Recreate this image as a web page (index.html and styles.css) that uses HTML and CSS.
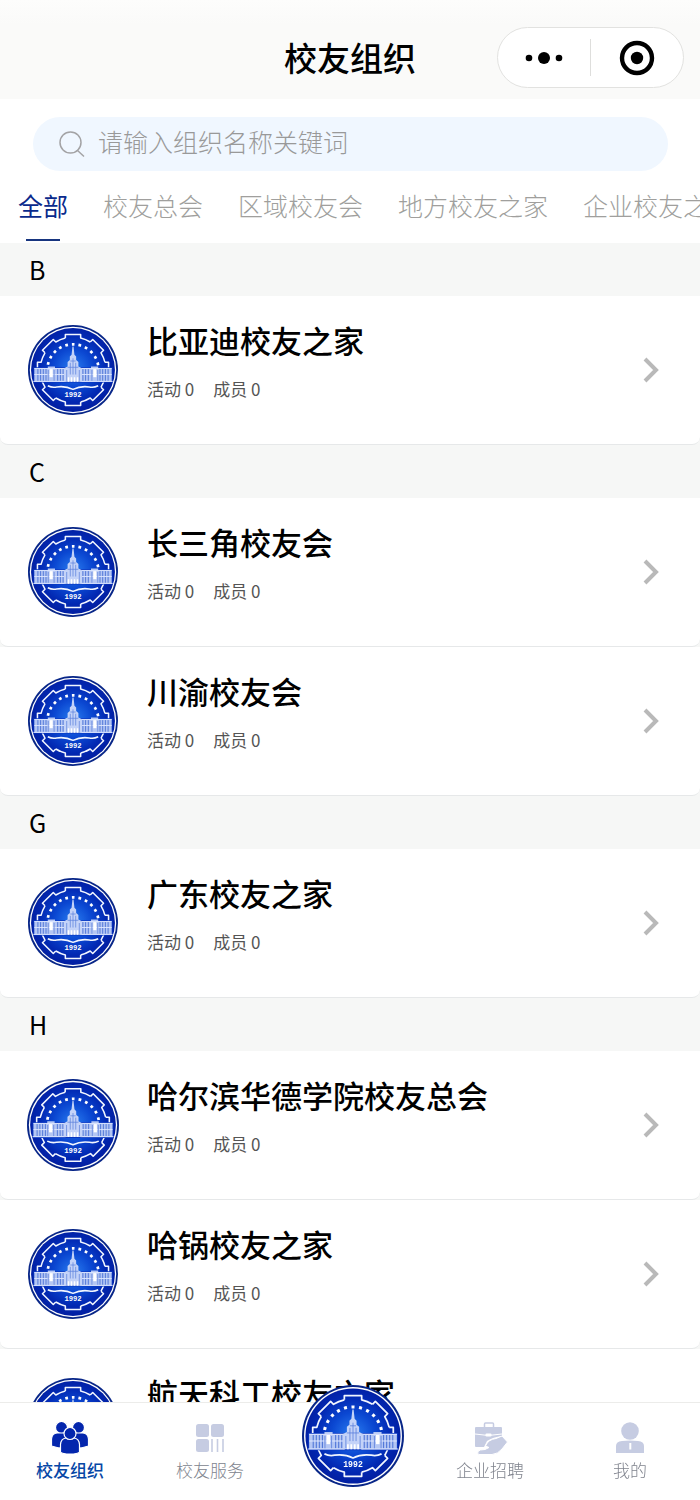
FILE: index.html
```html
<!DOCTYPE html>
<html lang="zh-CN">
<head>
<meta charset="utf-8">
<meta name="viewport" content="width=device-width, initial-scale=1">
<title>校友组织</title>
<link rel="stylesheet" href="styles.css">
</head>
<body>
<svg class="defs" aria-hidden="true">
  <defs>
    <radialGradient id="glow" cx="50%" cy="48%" r="50%">
      <stop offset="0" stop-color="#2a7df0"/>
      <stop offset="0.45" stop-color="#0b48d2"/>
      <stop offset="0.8" stop-color="#0228b2"/>
      <stop offset="1" stop-color="#0220a4"/>
    </radialGradient>
    <path id="tooth" d="M-8.5-35.5V-39.5H8.5V-35.5A36.5 36.5 0 0 1 19.1-31.1"/>
    <g id="wing">
      <path fill="#b4c6f3" d="M9-2H20V-4H28V-2H43V13H9z"/>
      <path stroke="#4a72d6" stroke-width="1" d="M11-1V12M14-1V12M17-1V12M30-1V12M33-1V12M36-1V12M39-1V12"/>
      <path stroke="#dfe8ff" stroke-width="1" d="M9-1.7H43M9 5H43M8 12.7H44"/>
      <path fill="#fff" d="M22.500-1H26V8H22.500z"/>
      <path stroke="#6d8de0" stroke-width="1" d="M21 0V12M27.500 0V12"/>
    </g>
    <symbol id="emblem" viewBox="-50 -50 100 100">
      <circle r="50" fill="#082688"/>
      <circle r="48" fill="#fff"/>
      <circle r="46.6" fill="url(#glow)"/>
      <g fill="none" stroke="#f2f6ff" stroke-width="1.7" stroke-linejoin="round">
        <use href="#tooth"/>
        <use href="#tooth" transform="rotate(45)"/>
        <use href="#tooth" transform="rotate(90)"/>
        <use href="#tooth" transform="rotate(135)"/>
        <use href="#tooth" transform="rotate(180)"/>
        <use href="#tooth" transform="rotate(225)"/>
        <use href="#tooth" transform="rotate(270)"/>
        <use href="#tooth" transform="rotate(315)"/>
      </g>
      <circle r="28.5" fill="none" stroke="#fff" stroke-width="3" stroke-dasharray="3 4.46" pathLength="179.04" stroke-dashoffset="1.5" transform="rotate(180)" clip-path="url(#upper)"/>
      <path fill="#0936c0" d="M-44-3H44V14H-44z"/>
      <use href="#wing"/>
      <use href="#wing" transform="scale(-1 1)"/>
      <path fill="#c4d3f8" d="M-.6-26H.6L1.6-17L3.500-15V-11L6-9V-4L10-2V13H-10V-2L-6-4V-9L-3.500-11V-15L-1.6-17z"/>
      <path stroke="#5b80dc" stroke-width=".8" d="M-3-8V5M0-13V5M3-8V5M-7 0V12M7 0V12M-6-3H6M-3-10H3"/>
      <path stroke="#fff" stroke-width="1.700" d="M-5 8V13M-1.700 8V13M1.700 8V13M5 8V13"/>
      <path fill="none" stroke="#f2f6ff" stroke-width="1.700" stroke-linejoin="round" d="M-28 17.500Q-23 20-18 18.800Q-8 17.500 0 21.500Q8 17.500 18 18.800Q23 20 28 17.500"/>
      <text class="emblem-year" x="0" y="30" text-anchor="middle">1992</text>
    </symbol>
    <clipPath id="upper"><path d="M-34-8H34V40H-34z"/></clipPath>
    <symbol id="arrow" viewBox="0 0 18 28">
      <path d="M3 3L14 14L3 25" fill="none" stroke="#b9b9b9" stroke-width="4"/>
    </symbol>
  </defs>
</svg>

<div class="app">
  <header class="titlebar">
    <h1 class="title">校友组织</h1>
    <div class="capsule">
      <button class="capsule-btn" type="button" aria-label="更多">
        <svg width="38" height="14" viewBox="0 0 38 14"><circle cx="4" cy="7" r="3.300"/><circle cx="19" cy="7" r="6"/><circle cx="34" cy="7" r="3.300"/></svg>
      </button>
      <button class="capsule-btn" type="button" aria-label="关闭">
        <svg width="36" height="36" viewBox="0 0 36 36"><circle cx="18" cy="18" r="15" fill="none" stroke="#000" stroke-width="4.400"/><circle cx="18" cy="18" r="6.200"/></svg>
      </button>
    </div>
  </header>

  <div class="filters">
    <label class="search">
      <svg class="search-icon" width="28" height="28" viewBox="0 0 28 28"><circle cx="12.500" cy="12.500" r="10.500"/><path d="M19 20L26 26.500"/></svg>
      <input class="search-input" type="search" aria-label="搜索组织" placeholder="请输入组织名称关键词">
    </label>
    <nav class="tabs" aria-label="组织类型">
      <button class="tab tab-active" type="button">全部</button>
      <button class="tab" type="button">校友总会</button>
      <button class="tab" type="button">区域校友会</button>
      <button class="tab" type="button">地方校友之家</button>
      <button class="tab" type="button">企业校友之家</button>
    </nav>
  </div>

  <main class="list">
    <h2 class="letter">B</h2>
    <a class="card" href="#byd"><span class="logo-slot"><svg class="logo"><use href="#emblem"/></svg></span><span class="info"><span class="name">比亚迪校友之家</span><span class="meta"><span>活动 0</span><span>成员 0</span></span></span><svg class="arrow"><use href="#arrow"/></svg></a>
    <h2 class="letter">C</h2>
    <a class="card" href="#csj"><span class="logo-slot"><svg class="logo"><use href="#emblem"/></svg></span><span class="info"><span class="name">长三角校友会</span><span class="meta"><span>活动 0</span><span>成员 0</span></span></span><svg class="arrow"><use href="#arrow"/></svg></a>
    <a class="card" href="#cy"><span class="logo-slot"><svg class="logo"><use href="#emblem"/></svg></span><span class="info"><span class="name">川渝校友会</span><span class="meta"><span>活动 0</span><span>成员 0</span></span></span><svg class="arrow"><use href="#arrow"/></svg></a>
    <h2 class="letter">G</h2>
    <a class="card" href="#gd"><span class="logo-slot"><svg class="logo"><use href="#emblem"/></svg></span><span class="info"><span class="name">广东校友之家</span><span class="meta"><span>活动 0</span><span>成员 0</span></span></span><svg class="arrow"><use href="#arrow"/></svg></a>
    <h2 class="letter">H</h2>
    <a class="card" href="#zh"><span class="logo-slot"><svg class="logo logo-main"><use href="#emblem"/></svg></span><span class="info"><span class="name">哈尔滨华德学院校友总会</span><span class="meta"><span>活动 0</span><span>成员 0</span></span></span><svg class="arrow"><use href="#arrow"/></svg></a>
    <a class="card" href="#hg"><span class="logo-slot"><svg class="logo"><use href="#emblem"/></svg></span><span class="info"><span class="name">哈锅校友之家</span><span class="meta"><span>活动 0</span><span>成员 0</span></span></span><svg class="arrow"><use href="#arrow"/></svg></a>
    <a class="card" href="#ht"><span class="logo-slot"><svg class="logo"><use href="#emblem"/></svg></span><span class="info"><span class="name">航天科工校友之家</span><span class="meta"><span>活动 0</span><span>成员 0</span></span></span><svg class="arrow"><use href="#arrow"/></svg></a>
  </main>

  <nav class="tabbar" aria-label="主导航">
    <a class="nav-item nav-active" href="#org">
      <svg class="nav-icon" viewBox="0 0 38 34">
        <g fill="#0426ad" stroke="#fff" stroke-width="1.200">
          <circle cx="10.500" cy="6.500" r="6"/><path d="M.5 18Q1 12.500 6 12H15Q18 13 18 17V27Q9 28 .5 25z"/>
          <circle cx="27.500" cy="6.500" r="6"/><path d="M37.500 18Q37 12.500 32 12H23Q20 13 20 17V27Q29 28 37.500 25z"/>
          <path d="M9.500 23.500Q10 17.500 15 17H23Q28 17.500 28.500 23.500V31Q27 33 19 33T9.500 31z"/><circle cx="19" cy="12.500" r="6"/>
        </g>
      </svg>
      <span>校友组织</span>
    </a>
    <a class="nav-item" href="#service">
      <svg class="nav-icon" viewBox="0 0 38 34">
        <g fill="#c6cce2"><rect x="5" y="3" width="13" height="13" rx="2.500"/><rect x="20" y="3" width="13" height="13" rx="2.500"/><rect x="5" y="18" width="13" height="13" rx="2.500"/></g>
        <path d="M21 18V31M26.500 18V31M32 18V31" stroke="#c6cce2" stroke-width="1.600"/>
      </svg>
      <span>校友服务</span>
    </a>
    <a class="nav-item nav-center" href="#home" aria-label="首页"><svg class="nav-logo"><use href="#emblem"/></svg></a>
    <a class="nav-item" href="#jobs">
      <svg class="nav-icon" viewBox="0 0 38 34">
        <path d="M13.500 7V3Q13.500 2 14.500 2H21.500Q22.500 2 22.500 3V7" fill="none" stroke="#c6cce2" stroke-width="1.500"/>
        <path fill="#c6cce2" d="M5 6H30Q31 6 31 7V15Q22 16 16 20L13 26H5Q4 26 4 25V7Q4 6 5 6z"/>
        <path d="M4 13Q17 16 31 13" fill="none" stroke="#fff" stroke-width="1"/>
        <rect x="14.500" y="12.500" width="6" height="3" rx="1" fill="#fff"/>
        <path fill="#c6cce2" stroke="#fff" stroke-width="1" d="M14.500 25Q17 18.500 25 17.500L31 15L36.500 21L31 28Q27 33 21 33.500H8Q6 33 7 30.500Q8 28.500 14 28.500L18 26.500z"/>
      </svg>
      <span>企业招聘</span>
    </a>
    <a class="nav-item" href="#me">
      <svg class="nav-icon" viewBox="0 0 38 34">
        <circle cx="19" cy="10" r="8.800" fill="#c6cce2"/>
        <path fill="#c6cce2" d="M5 32V25Q5 20.500 11 20Q19 19 27 20Q33 20.500 33 25V32z"/>
        <path d="M19.300 22V28.500" stroke="#fff" stroke-width="2"/>
      </svg>
      <span>我的</span>
    </a>
  </nav>
</div>
</body>
</html>
```
FILE: styles.css
```css
* { box-sizing: border-box; }

body {
  margin: 0;
  background: #fff;
  color: #000;
  font-family: "Noto Sans CJK SC", "Noto Sans", sans-serif;
}

button { border: 0; padding: 0; background: none; font: inherit; color: inherit; }
a { color: inherit; text-decoration: none; }

.defs { position: absolute; width: 0; height: 0; }
.emblem-year { font: bold 8px "Liberation Mono", monospace; fill: #fff; }

.app { display: flex; flex-direction: column; height: 100vh; }

.titlebar {
  display: grid;
  grid-template-columns: 1fr auto 1fr;
  align-items: center;
  flex: none;
  padding: 27px 16px 11px;
  background: linear-gradient(#fdfdfc, #fafaf9 24px);
}
.title { grid-column: 2; margin: 0; padding-bottom: 2px; font-size: 33px; line-height: 40px; font-weight: 500; }
.capsule {
  display: flex;
  align-items: center;
  justify-self: end;
  width: 187px;
  height: 61px;
  border: 1px solid #e2e2e0;
  border-radius: 31px;
  background: #fff;
}
.capsule-btn { display: flex; flex: 1; align-items: center; justify-content: center; height: 37px; }
.capsule-btn + .capsule-btn { border-left: 1px solid #dededc; }

.filters { flex: none; padding-top: 18px; }
.search {
  display: flex;
  align-items: center;
  gap: 12px;
  height: 54px;
  margin: 0 32px 0 33px;
  padding: 0 25px;
  border-radius: 27px;
  background: #f0f7ff;
}
.search-icon { flex: none; fill: none; stroke: #a3a3a5; stroke-width: 1.5; }
.search-input {
  flex: 1;
  min-width: 0;
  height: 50px;
  padding: 0 0 6px;
  border: 0;
  outline: 0;
  background: none;
  font: 300 25px "Noto Sans CJK SC", sans-serif;
}
.search-input::placeholder { color: #999; opacity: 1; }

.tabs { display: flex; gap: 35px; height: 72px; padding: 14px 0 0 18px; overflow: hidden; }
.tab {
  display: flex;
  flex: none;
  flex-direction: column;
  align-items: center;
  gap: 14px;
  height: 56px;
  font-size: 25px;
  line-height: 40px;
  font-weight: 300;
  color: #a09f9d;
}
.tab-active { font-weight: 400; color: #0a2a8c; }
.tab-active::after { content: ""; width: 34px; height: 2px; background: #17357f; }

.list { flex: 1; min-height: 0; overflow-y: auto; scrollbar-width: none; background: #f6f7f6; }
.letter { margin: 0; padding: 0 29px; font-size: 25px; line-height: 53px; font-weight: 400; }
.card {
  display: flex;
  align-items: flex-start;
  height: 149px;
  padding: 28px 40px 0 27px;
  border-bottom: 1px solid #e6e8e9;
  border-radius: 0 0 8px 8px;
  background: #fff;
}
.logo-slot { display: flex; flex: none; align-items: center; justify-content: center; width: 92px; height: 92px; }
.logo { width: 90px; height: 90px; }
.logo-main { width: 92px; height: 92px; }
.info { display: flex; flex: 1; flex-direction: column; gap: 20px; min-width: 0; padding-left: 28px; }
.name { font-size: 31px; line-height: 32px; font-weight: 500; white-space: nowrap; }
.meta { display: flex; gap: 19px; font-size: 17px; line-height: 26px; color: #555; }
.arrow { flex: none; align-self: flex-start; width: 18px; height: 28px; margin-top: 32px; }

.tabbar {
  display: grid;
  grid-template-columns: repeat(5, 1fr);
  flex: none;
  position: relative;
  height: 98px;
  border-top: 1px solid #ececea;
  background: #fff;
}
.nav-item {
  display: flex;
  flex-direction: column;
  align-items: center;
  gap: 2px;
  padding-top: 18px;
  font-size: 17px;
  line-height: 25px;
  font-weight: 300;
  color: #80848e;
}
.nav-active { font-weight: 500; color: #0647a6; }
.nav-icon { width: 38px; height: 34px; }
.nav-center { padding: 0; }
.nav-logo { flex: none; width: 102px; height: 102px; margin: -18px 0 0 5px; }
```
